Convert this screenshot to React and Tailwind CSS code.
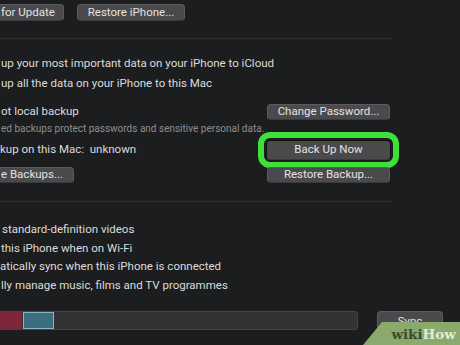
import React from "react";

const font = { fontFamily: "Roboto, 'Noto Sans', sans-serif" };

const Btn = ({ children, className = "" }) => (
  <div
    className={`flex items-center justify-center rounded-[4px] border border-[#5c5c5e] border-b-[#3a3a3c] bg-[#4a4a4c] text-[11.5px] text-[#e2e2e2] ${className}`}
  >
    {children}
  </div>
);

const Line = ({ children, className = "" }) => (
  <div className={`flex items-center whitespace-nowrap text-[11.5px] text-[#dcdcdc] ${className}`}>
    {children}
  </div>
);

const WikiHow = () => (
  <div className="absolute bottom-0 right-0 h-[23px] w-[97px]">
    <svg width="97" height="23" viewBox="0 0 97 23" className="absolute inset-0">
      <polygon points="0,23 19,0 97,0 97,23" fill="#8aa96c" />
    </svg>
    <div
      className="absolute bottom-[4px] right-[4px] text-[13.5px] font-bold leading-none"
      style={{ fontFamily: "'DejaVu Serif', serif" }}
    >
      <span className="text-[#3b4a30]">wiki</span>
      <span className="text-[#e3ead9]">How</span>
    </div>
  </div>
);

export default function App() {
  return (
    <div className="relative h-[345px] w-[460px] overflow-hidden bg-[#1c1d1f]" style={font}>
      <div className="flex flex-col pt-[4px]">
        {/* top buttons */}
        <div className="flex h-[17px] gap-[13px]">
          <Btn className="ml-[-10px] w-[74px] justify-start pl-[10px]">for Update</Btn>
          <Btn className="w-[108px]">Restore iPhone...</Btn>
        </div>

        <div className="mt-[17px] h-px w-[392px] bg-[#2f3032]" />

        <Line className="mt-[15px] h-[20px] pl-[1px]">
          up your most important data on your iPhone to iCloud
        </Line>
        <Line className="h-[20px] pl-[1px]">up all the data on your iPhone to this Mac</Line>

        <div className="mt-[10px] flex h-[16px] items-center">
          <Line className="w-[267px] pl-[1px]">ot local backup</Line>
          <Btn className="h-[16px] w-[123px]">Change Password...</Btn>
        </div>

        <div className="flex h-[16px] items-center whitespace-nowrap pl-[1px] text-[10px] text-[#8e8e90]">
          ed backups protect passwords and sensitive personal data.
        </div>

        <div className="mt-[4px] flex h-[20px] items-center">
          <Line className="w-[266px]">kup on this Mac:&nbsp; unknown</Line>
          <Btn className="h-[20px] w-[125px] border-[#111] outline-[6px] outline-offset-[2px] outline-[#3fe03a] outline-solid">
            Back Up Now
          </Btn>
        </div>

        <div className="mt-[7px] flex h-[16px] items-center">
          <div className="w-[267px]">
            <Btn className="ml-[-10px] h-[16px] w-[84px] justify-start pl-[10px]">e Backups...</Btn>
          </div>
          <Btn className="h-[16px] w-[123px]">Restore Backup...</Btn>
        </div>

        <div className="mt-[18px] h-px w-[392px] bg-[#2f3032]" />

        <Line className="mt-[18px] h-[19px] pl-[2px]">standard-definition videos</Line>
        <Line className="h-[19px] pl-[1px]">this iPhone when on Wi-Fi</Line>
        <Line className="h-[18px]">atically sync when this iPhone is connected</Line>
        <Line className="h-[19px] pl-[1px]">lly manage music, films and TV programmes</Line>

        <div className="mt-[16px] flex h-[19px] items-center">
          <div className="flex h-[19px] w-[358px] overflow-hidden rounded-r-[4px] border border-l-0 border-[#444446] bg-[#333335]">
            <div className="w-[22px] bg-[#7e2539]" />
            <div className="ml-[1px] w-[31px] border border-[#8fb4c0] bg-[#3b6f80]" />
          </div>
          <Btn className="ml-[19px] h-[19px] w-[66px] items-start pt-[1px]">Sync</Btn>
        </div>
      </div>
      <WikiHow />
    </div>
  );
}
